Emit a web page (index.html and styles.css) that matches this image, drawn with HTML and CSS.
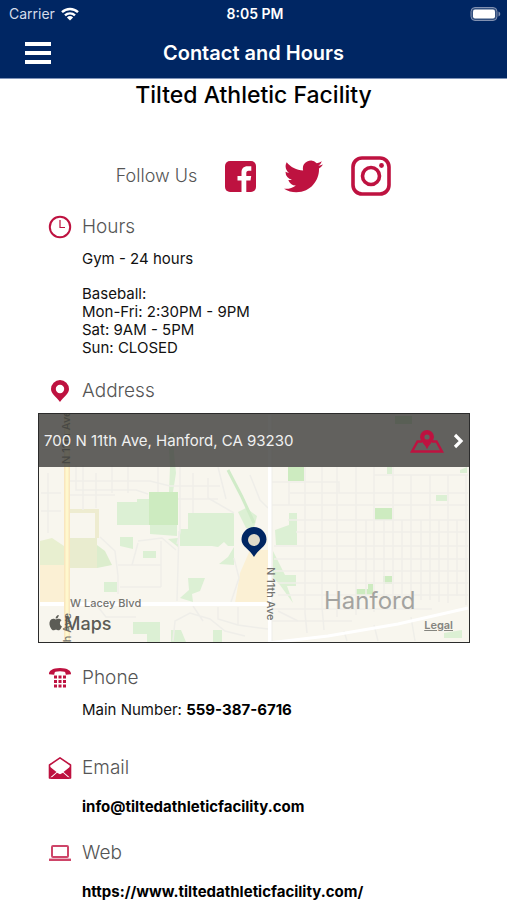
FILE: index.html
```
<!DOCTYPE html>
<html lang="en">
<head>
    <meta charset="UTF-8">
    <meta name="viewport" content="width=device-width, initial-scale=1">
    <title>Contact and Hours</title>
    <link rel="stylesheet" href="styles.css">
</head>
<body>
    <header>
        <!-- status bar -->
        <div class="status">
            <div class="carrier">
                <span>Carrier</span>
                <svg width="18" height="14" viewBox="0 0 18 14">
                    <g fill="none" stroke="#fff" stroke-width="2.4">
                        <path d="M1 5.2a11.5 11.5 0 0 1 16 0"/>
                        <path d="M4 8.4a7.2 7.2 0 0 1 10 0"/>
                    </g>
                    <path d="M9 13.6L5.9 10.5a4.5 4.5 0 0 1 6.2 0z" fill="#fff"/>
                </svg>
            </div>
            <span class="time">8:05 PM</span>
            <svg class="battery" width="31" height="14" viewBox="0 0 31 14">
                <rect x="1" y=".5" width="26" height="13" rx="4" fill="#33507f" stroke="#8291b1"/>
                <rect x="3" y="2.5" width="22" height="9" rx="2" fill="#fff"/>
                <path d="M28.5 4.5v5q1.800-.8 1.800-2.500t-1.800-2.500z" fill="#8291b1"/>
            </svg>
        </div>
        <nav>
            <button class="menu" aria-label="Menu">
                <svg width="26" height="22" viewBox="0 0 26 22" fill="#fff">
                    <rect width="26" height="4"/>
                    <rect y="9" width="26" height="4"/>
                    <rect y="18" width="26" height="4"/>
                </svg>
            </button>
            <h1>Contact and Hours</h1>
        </nav>
    </header>

    <main>
        <h2>Tilted Athletic Facility</h2>

        <!-- social links -->
        <div class="social">
            <span>Follow Us</span>
            <a href="#" aria-label="Facebook">
                <svg width="31" height="31" viewBox="0 0 31 31">
                    <rect width="31" height="31" rx="5" fill="#be1240"/>
                    <path d="M16.500 31V19.500H12.500V15h4v-3.500c0-4 2.200-6.200 6-6.200h3.800v4.500h-2.600c-1.900 0-2.400.9-2.400 2.400V15h4.900l-.7 4.500h-4.200V31z" fill="#fff"/>
                </svg>
            </a>
            <a href="#" aria-label="Twitter">
                <svg width="39" height="33" viewBox="0 2 24 20">
                    <path fill="#be1240" d="M23.953 4.570a10 10 0 01-2.825.775 4.958 4.958 0 002.163-2.723c-.951.555-2.005.959-3.127 1.184a4.920 4.920 0 00-8.384 4.482C7.690 8.095 4.067 6.130 1.640 3.162a4.822 4.822 0 00-.666 2.475c0 1.710.87 3.213 2.188 4.096a4.904 4.904 0 01-2.228-.616v.06a4.923 4.923 0 003.946 4.827 4.996 4.996 0 01-2.212.085 4.936 4.936 0 004.604 3.417 9.867 9.867 0 01-6.102 2.105c-.39 0-.779-.023-1.170-.067a13.995 13.995 0 007.557 2.209c9.053 0 13.998-7.496 13.998-13.985 0-.21 0-.42-.015-.63A9.935 9.935 0 0024 4.590z"/>
                </svg>
            </a>
            <a href="#" aria-label="Instagram">
                <svg width="40" height="40" viewBox="0 0 40 40" fill="none" stroke="#be1240" stroke-width="3.600">
                    <rect x="2" y="2" width="36" height="36" rx="9"/>
                    <circle cx="20" cy="20" r="8.500"/>
                    <circle cx="30.500" cy="9.500" r="2.400" fill="#be1240" stroke="none"/>
                </svg>
            </a>
        </div>

        <section>
            <h3>
                <svg width="24" height="24" viewBox="0 0 24 24" fill="none" stroke="#be1240">
                    <circle cx="12" cy="12" r="10.200" stroke-width="2"/>
                    <path d="M12 5v7.500h5" stroke-width="1.200"/>
                </svg>
                Hours
            </h3>
            <p>Gym - 24 hours</p>
            <p class="times">Baseball:<br>
                Mon-Fri: 2:30PM - 9PM<br>
                Sat: 9AM - 5PM<br>
                Sun: CLOSED</p>
        </section>

        <section>
            <h3>
                <svg width="24" height="24" viewBox="0 0 24 24">
                    <path fill="#be1240" fill-rule="evenodd" d="M12 1a9 9 0 0 0-9 9c0 5 5 7.500 9 13 4-5.500 9-8 9-13a9 9 0 0 0-9-9zm0 4.800a4.200 4.200 0 1 1 0 8.400 4.200 4.200 0 0 1 0-8.400z"/>
                </svg>
                Address
            </h3>
        </section>

        <!-- map -->
        <div class="map">
            <svg class="tiles" viewBox="1 1 430 228" preserveAspectRatio="xMidYMid slice">
                <rect width="432" height="230" fill="#f8f6ee"/>
                <!-- blocks -->
                <path d="M2 152h24v38H2zM212 137h18v53h-33l5-30z" fill="#fbf0d4"/>
                <path d="M2 128l12-3 12 8v19H2z" fill="#e8efd0"/>
                <path d="M32 125h27v30H32z" fill="#e9eccf"/>
                <path d="M59 132l8 6 7 14-15 3z" fill="#dcedcd"/>
                <!-- parks -->
                <g fill="#dcf0d4">
                    <path d="M79 89h20v-3h12v26H79zM150 100h46v33h-6l-4-4-6 5-6-1h-32v-17h8z"/>
                    <path d="M190 144l6-10v18l-15-1zM130 126l10-1v9zM112 112h27v11l-27-2z"/>
                    <path d="M82 124h13v12l-13-3zM105 138h13v7h-13zM66 169h13v10H66z"/>
                    <path d="M150 165h17l-5 13-8 3 1 8-13-4 9-8zM95 209h27v20h-13v-8H95zM133 217h10l5 12h-15zM175 217h9v12h-9z"/>
                    <path d="M130 20h6v20l2 20-3 19h-4l1-25zM200 99l8-4 11 8-3 12h-8z"/>
                    <path d="M237 117l14-5v-12h8v32h-21zM235 138l12 24h11v11h-9l6 17-13-18-7-8z"/>
                    <path d="M398 82h11v6h-11zM422 57l7-3v6h-7zM349 54h5v7h-5zM406 220l18-3v8h-18z"/>
                </g>
                <g fill="#cdebc0">
                    <path d="M111 79h29v33h-29zM250 54h16v14h-16zM337 95h17v12h-17zM345 163h9v8h-9zM318 176h12v-5h5v11h-17zM357 3h17v8h-17z"/>
                </g>
                <path d="M190 57l14 27 12 26" fill="none" stroke="#d0ebc8" stroke-width="3"/>
                <path d="M32 98h27v27" fill="none" stroke="#eeecd0" stroke-width="4"/>
                <!-- side streets -->
                <g fill="none" stroke="#efeee9" stroke-width="1.500">
                    <path d="M38 52v25h60l12 4M45 52v45M58 60v35M74 52v28M90 52v28M120 54v25M142 54v65l-3 12M155 60v40M170 65v20l26 15M180 54l8 32"/>
                    <path d="M32 68h80l20 5h50M32 82h45M140 86h40"/>
                    <path d="M62 124l15 14 3 25v18M80 152h43M82 174h41M123 128v46M100 130l-6 22M141 118l-2 70M100 128l24-3 14 12M196 145l5 20-8 24M3 80h20M3 98h20M10 60v60"/>
                    <path d="M135 228l2-20 15-8 20 6 15 12 20 5M60 194l8 10h30M155 193l10 15M200 194v18l30 4M180 194v12l20 6"/>
                    <path d="M234 69h67v11h129M300 80h-48M234 92h196M336 62h94M250 107h180M258 119h172M236 133h194M236 146h194M236 158h194M240 170h190M240 182h190M234 196h160M234 208h80"/>
                    <path d="M251 68v24M267 54v146l2 20M284 54v140l2 23M299 54v150M318 54v148M336 54v145M355 54v140M373 62v128M392 62v125M410 62v128M428 62v130M328 107v82M346 107v80M364 107v82M383 107v80M401 107v82M419 107v76"/>
                    <path d="M306 218l3 10M336 212l4 16M373 204l4 24M240 198l20 10M212 62l10 25 8 8"/>
                </g>
                <!-- main roads -->
                <path d="M2 191h230M232 2v228" stroke="#fff" stroke-width="4"/>
                <path d="M234 2v226" stroke="#eeede8" stroke-width="1"/>
                <path d="M230 230l60-7 70-12 70-16" fill="none" stroke="#fff" stroke-width="3"/>
                <path d="M29 1v228" stroke="#f9e6bf" stroke-width="6"/>
                <path d="M29 1v228" stroke="#fff8cd" stroke-width="3"/>
                <!-- labels -->
                <g class="road">
                    <text x="32" y="194">W Lacey Blvd</text>
                    <text transform="translate(229 154) rotate(90)">N 11th Ave</text>
                    <text transform="translate(32 51) rotate(-90)">N 11th Ave</text>
                    <text transform="translate(33 200) rotate(-90)" text-anchor="end">N 11th Ave</text>
                </g>
                <text class="city" x="286" y="196">Hanford</text>
                <!-- apple logo -->
                <path transform="translate(10 202) scale(.64)" fill="#5c5c56" d="M12.152 6.896c-.948 0-2.415-1.078-3.960-1.040-2.040.027-3.910 1.183-4.961 3.014-2.117 3.675-.546 9.103 1.519 12.090 1.013 1.454 2.208 3.090 3.792 3.039 1.520-.065 2.090-.987 3.935-.987 1.831 0 2.350.987 3.960.948 1.637-.026 2.676-1.480 3.676-2.948 1.156-1.688 1.636-3.325 1.662-3.415-.039-.013-3.182-1.221-3.220-4.857-.026-3.040 2.480-4.494 2.597-4.559-1.429-2.090-3.623-2.324-4.390-2.376-2-.156-3.675 1.090-4.610 1.090zM15.530 3.830c.843-1.012 1.400-2.427 1.245-3.830-1.207.052-2.662.805-3.532 1.818-.78.896-1.454 2.338-1.273 3.714 1.338.104 2.715-.688 3.559-1.701"/>
                <text class="maps" x="26" y="217">Maps</text>
                <!-- pin -->
                <circle cx="216" cy="127" r="7" fill="#e0dac9"/>
                <path fill="#002663" fill-rule="evenodd" d="M216 114a12.500 12.500 0 0 0-12.500 12.500c0 7 8.500 10 12.500 17.500 4-7.500 12.500-10.500 12.500-17.500A12.500 12.500 0 0 0 216 114zm0 7a6 6 0 1 1 0 12 6 6 0 0 1 0-12z"/>
            </svg>
            <a class="address" href="#">
                <span>700 N 11th Ave, Hanford, CA 93230</span>
                <svg width="34" height="24" viewBox="0 0 34 24" fill="none" stroke="#be1240" stroke-width="2.400">
                    <path d="M12 12.500H7.500L2 22.500h30l-5.500-10H22"/>
                    <path d="M17 17.500c-2-4-5.800-5.500-5.800-9.500a5.800 5.800 0 0 1 11.600 0c0 4-3.800 5.500-5.800 9.500z" fill="#be1240"/>
                    <circle cx="17" cy="8" r="2.600" fill="#63625f" stroke="none"/>
                </svg>
                <svg width="12" height="16" viewBox="0 0 12 16">
                    <path d="M3 2l6 6-6 6" fill="none" stroke="#fff" stroke-width="3.200"/>
                </svg>
            </a>
            <a class="legal" href="#">Legal</a>
        </div>

        <section class="phone">
            <h3>
                <svg width="24" height="24" viewBox="0 0 24 24" fill="#be1240">
                    <path d="M1 8.200C.5 5 4.500 2 12 2s11.500 3 11 6.200l-5.200.6c-.4-1.600-.3-2.600-1.300-3-2.600-.8-6.400-.8-9 0-1 .4-.9 1.400-1.300 3z"/>
                    <path d="M6 9.500h3v3H6zM10.500 9.500h3v3h-3zM15 9.500h3v3h-3zM6 14h3v3H6zM10.500 14h3v3h-3zM15 14h3v3h-3zM6 18.500h3v3H6zM10.500 18.500h3v3h-3zM15 18.500h3v3h-3z"/>
                </svg>
                Phone
            </h3>
            <p>Main Number: <a href="tel:559-387-6716">559-387-6716</a></p>
        </section>

        <section class="email">
            <h3>
                <svg width="24" height="24" viewBox="0 0 24 24">
                    <path d="M1.500 9L12 1.800 22.500 9v13h-21z" fill="#fff" stroke="#be1240" stroke-width="1.600" stroke-linejoin="round"/>
                    <path d="M1 10l7.500 6L1 22.500zM23 10l-7.500 6 7.500 6.500zM2 23l7-6.200 3 1.400 3-1.400 7 6.200z" fill="#be1240"/>
                </svg>
                Email
            </h3>
            <p><a href="mailto:info@tiltedathleticfacility.com">info@tiltedathleticfacility.com</a></p>
        </section>

        <section class="web">
            <h3>
                <svg width="24" height="24" viewBox="0 0 24 24" fill="none" stroke="#ce4569">
                    <rect x="4" y="5" width="16" height="11" rx="1" stroke-width="2"/>
                    <path d="M1 18.800h22" stroke-width="2.400"/>
                </svg>
                Web
            </h3>
            <p><a href="https://www.tiltedathleticfacility.com/">https://www.tiltedathleticfacility.com/</a></p>
        </section>
    </main>
</body>
</html>
```
FILE: styles.css
```
*{
    box-sizing: border-box;
}
body{
    margin: 0;
    background: #fff;
    color: #111;
    font-family: Inter, "Liberation Sans", sans-serif;
    font-size: 15px;
    line-height: 18px;
}
svg{
    display: block;
    flex: none;
}
h1, h2, h3, p{
    margin: 0;
}
a{
    color: inherit;
    text-decoration: none;
}

/* top bar */
header{
    background: #002663;
    color: #fff;
    border-bottom: 1px solid #7f93b8;
}
.status{
    display: grid;
    grid-template-columns: 1fr auto 1fr;
    align-items: center;
    height: 27px;
    padding: 0 6px 0 9px;
    font-size: 14px;
}
.carrier{
    display: flex;
    align-items: center;
    gap: 6px;
    color: #d5dcea;
}
.time{
    font-weight: 600;
}
.battery{
    justify-self: end;
}
nav{
    display: grid;
    grid-template-columns: 1fr auto 1fr;
    align-items: center;
    height: 51px;
    padding: 0 25px;
}
.menu{
    justify-self: start;
    padding: 0;
    border: 0;
    background: none;
}
h1{
    font-size: 20px;
    font-weight: 600;
    line-height: 24px;
}

h2{
    margin-bottom: 44px;
    font-size: 23px;
    font-weight: 500;
    line-height: 33px;
    text-align: center;
    color: #000;
}
.social{
    display: flex;
    justify-content: center;
    align-items: center;
    gap: 28px;
    height: 40px;
    margin-bottom: 19px;
    font-size: 18px;
    font-weight: 300;
    color: #555;
}

/* contact blocks */
section{
    padding: 0 48px 22px;
}
h3{
    display: flex;
    align-items: center;
    gap: 10px;
    height: 24px;
    font-size: 19px;
    font-weight: 300;
    color: #555;
}
section p{
    padding: 11px 0 0 34px;
}
section .times{
    padding-top: 17px;
}
section p a{
    font-weight: 700;
    color: #000;
}
.phone{
    padding-bottom: 37px;
}
.email p, .web p{
    padding-top: 18px;
}
.email{
    padding-bottom: 25px;
}
.web{
    padding-bottom: 0;
}

/* map */
.map{
    position: relative;
    height: 230px;
    margin: -12px 37px 23px 38px;
    border: 1px solid #2b2b2b;
    overflow: hidden;
}
.tiles{
    width: 100%;
    height: 100%;
}
.address{
    position: absolute;
    top: 0;
    left: 0;
    right: 0;
    display: flex;
    align-items: center;
    gap: 8px;
    height: 53px;
    padding: 0 5px;
    background: rgba(60, 60, 58, 0.8);
    color: #f0f0f0;
}
.address span{
    flex: 1;
}
.legal{
    position: absolute;
    right: 16px;
    bottom: 8px;
    font-size: 11px;
    font-weight: 600;
    color: #85857f;
    text-decoration: underline;
}
.road{
    font-size: 11px;
    font-weight: 500;
    fill: #74746f;
}
.city{
    font-size: 24px;
    fill: #a3a3a0;
}
.maps{
    font-size: 18px;
    font-weight: 500;
    fill: #5c5c56;
}
```
